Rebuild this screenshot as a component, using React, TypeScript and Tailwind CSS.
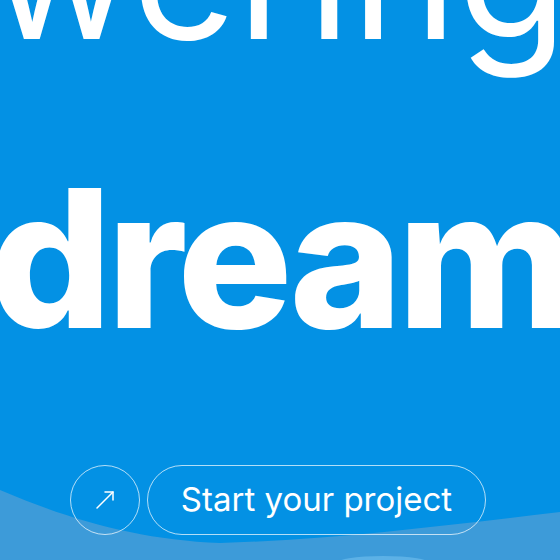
const fontStack = { fontFamily: "Inter, 'Noto Sans', sans-serif" };

function Waves() {
  return (
    <svg
      className="absolute inset-x-0 bottom-0 w-full h-[80px]"
      viewBox="0 0 560 80"
      preserveAspectRatio="none"
    >
      <path
        d="M0 10 C 70 40, 140 60, 220 63 C 330 60, 450 45, 560 32 L560 80 L0 80 Z"
        fill="#3d9bd9"
      />
      <ellipse cx="383" cy="84" rx="48" ry="8" fill="#5cb1e6" />
    </svg>
  );
}

function Arrow() {
  return (
    <svg viewBox="0 0 20 20" className="w-[20px] h-[20px]" fill="none" stroke="currentColor" strokeWidth="1.5" strokeLinecap="round" strokeLinejoin="round">
      <path d="M2 18 L18 2" />
      <path d="M10 2 H18 V10" />
    </svg>
  );
}

export default function App() {
  return (
    <div
      className="relative w-full h-[560px] bg-[#0391e4] overflow-hidden text-white"
      style={fontStack}
    >
      <Waves />
      <div className="relative flex flex-col">
        <div className="flex whitespace-nowrap mt-[-116px] ml-[-12px] text-[180px] leading-none font-normal">
          wering
        </div>
        <div className="flex justify-center whitespace-nowrap mt-[98px] text-[192px] leading-none font-extrabold tracking-[-5px]">
          dream
        </div>
        <div className="flex items-center justify-center gap-[7px] mt-[111px] pr-[4px]">
          <button className="flex items-center justify-center w-[70px] h-[70px] rounded-full border-[1.5px] border-white/70">
            <Arrow />
          </button>
          <button className="flex items-center justify-center w-[339px] h-[70px] rounded-full border-[1.5px] border-white/70 text-[33px] font-normal">
            Start your project
          </button>
        </div>
      </div>
    </div>
  );
}
